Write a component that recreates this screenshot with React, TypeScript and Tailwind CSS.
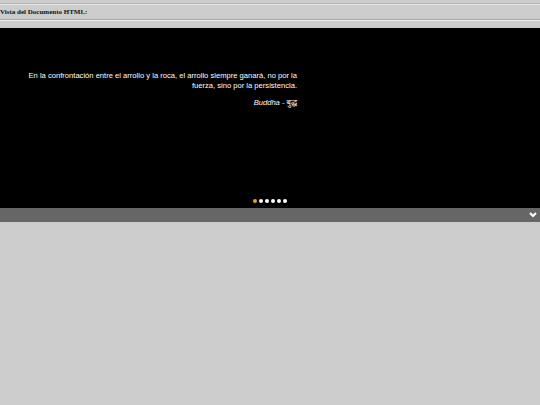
export default function App() {
  const dots = [0, 1, 2, 3, 4, 5]
  return (
    <div className="w-[540px] h-[405px] bg-[#cccccc] overflow-hidden">
      <div className="h-[28px] flex flex-col">
        <div className="mt-[3px] h-[1px] bg-[#b3b3b3]" />
        <div className="h-[1px] bg-[#e6e6e6]" />
        <div
          className="pt-[3px] h-[13px] text-[7px] leading-[9px] font-bold text-[#111]"
          style={{ fontFamily: '"Liberation Serif", serif' }}
        >
          Vista del Documento HTML:
        </div>
        <div className="mt-[1px] h-[1px] bg-[#a8a8a8]" />
        <div className="h-[1px] bg-[#ececec]" />
      </div>
      <div
        className="h-[180px] bg-black relative text-white"
        style={{ fontFamily: '"Liberation Sans", Arial, sans-serif' }}
      >
        <div className="pt-[43px] w-[297px] text-right text-[7.6px] leading-[10px]">
          <p>
            En la confrontación entre el arrollo y la roca, el arrollo siempre ganará, no por la
            <br />
            fuerza, sino por la persistencia.
          </p>
          <p
            className="mt-[7px] italic"
            style={{ fontFamily: '"Liberation Sans", "Noto Sans", sans-serif' }}
          >
            Buddha - बुद्ध
          </p>
        </div>
        <div className="absolute left-[253px] top-[171px] flex gap-[2px]">
          {dots.map((d) => (
            <span
              key={d}
              className={
                d === 0
                  ? "w-[4px] h-[4px] rounded-full bg-[#e8a33d]"
                  : "w-[4px] h-[4px] rounded-full bg-white"
              }
            />
          ))}
        </div>
      </div>
      <div className="h-[14px] bg-[#666666] flex items-center justify-end pr-[3px]">
        <svg width="8" height="6" viewBox="0 0 8 6">
          <path d="M1 1 L4 4 L7 1" stroke="white" strokeWidth="2" fill="none" />
        </svg>
      </div>
    </div>
  )
}
